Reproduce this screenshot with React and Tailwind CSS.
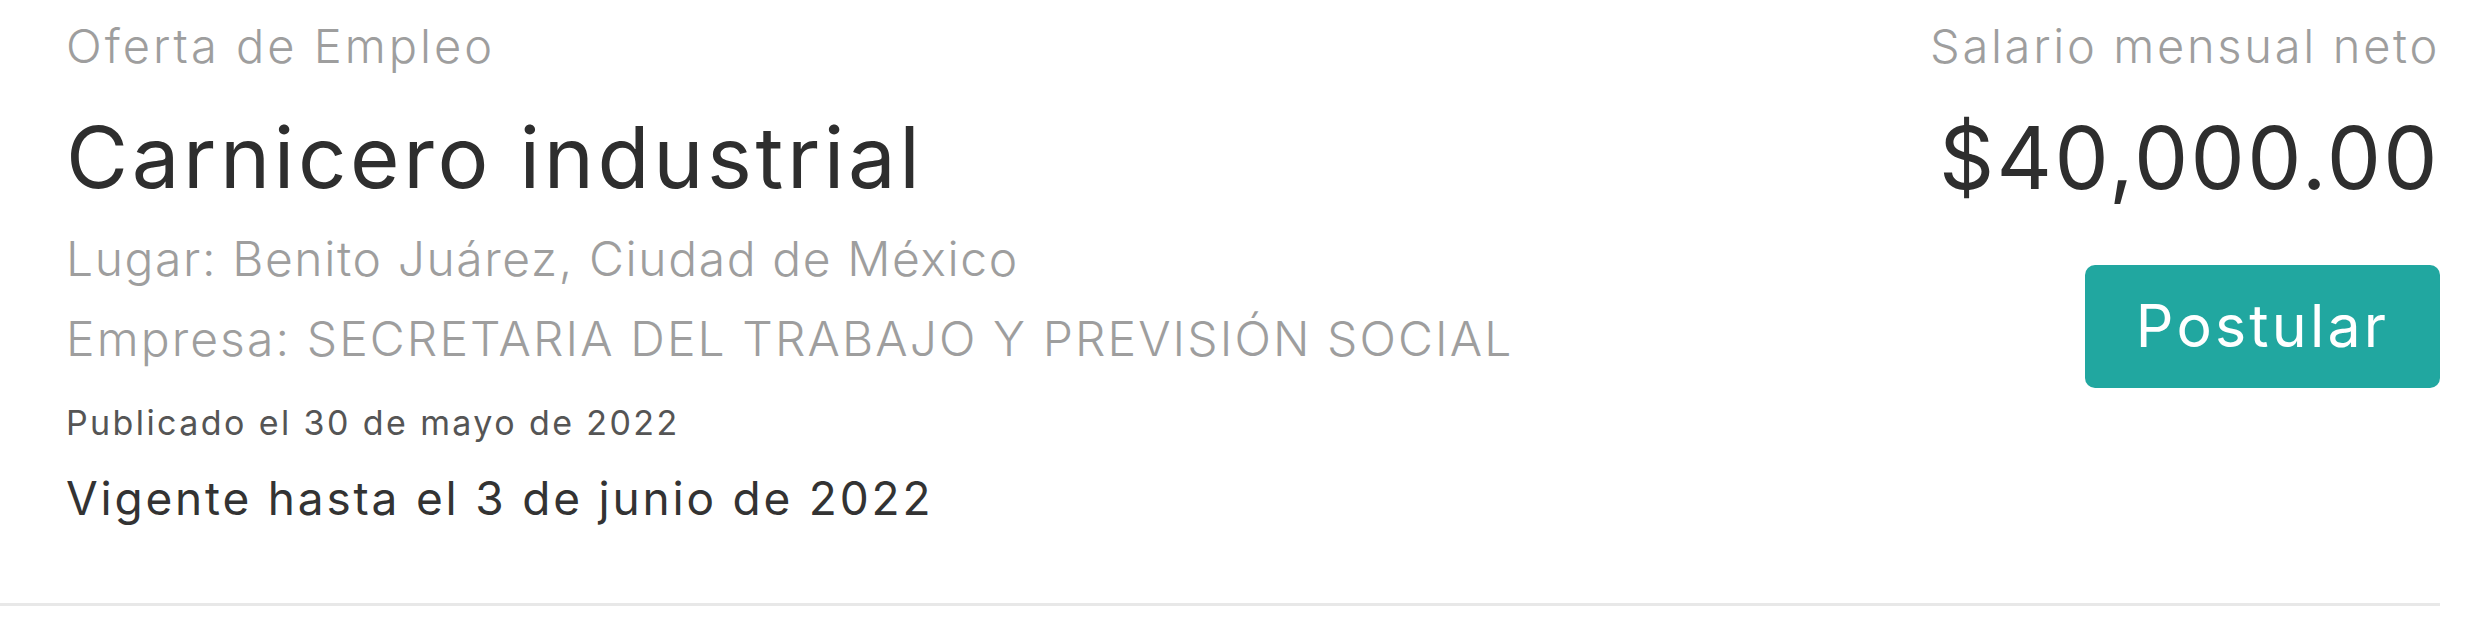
export default function App() {
  return (
    <div className="w-[2471px] h-[620px] bg-white" style={{ fontFamily: 'Inter, "Noto Sans", sans-serif' }}>
      <div className="w-[2440px] h-[606px] border-b-[3px] border-[#e8e8e8] flex justify-between">
        <div className="pl-[66px] flex flex-col">
          <div className="h-[80px] pt-[18px] text-[47px] leading-[56px] font-light tracking-[3px] text-[#9e9e9e]">Oferta de Empleo</div>
          <div className="h-[141px] pt-[28px] text-[85px] leading-[100px] font-normal tracking-[3.6px] text-[#2e2e2e]">Carnicero industrial</div>
          <div className="h-[89px] pt-[9px] text-[48px] leading-[58px] font-light tracking-[1.6px] text-[#9e9e9e]">Lugar: Benito Juárez, Ciudad de México</div>
          <div className="h-[93px] text-[48px] leading-[58px] font-light tracking-[2.1px] text-[#9e9e9e]">Empresa: SECRETARIA DEL TRABAJO Y PREVISIÓN SOCIAL</div>
          <div className="h-[68px] text-[34px] leading-[40px] font-normal tracking-[2.4px] text-[#555555]">Publicado el 30 de mayo de 2022</div>
          <div className="text-[46px] leading-[54px] font-normal tracking-[2.8px] text-[#333333]">Vigente hasta el 3 de junio de 2022</div>
        </div>
        <div className="flex flex-col items-end">
          <div className="h-[80px] pt-[18px] text-[47px] leading-[56px] font-light tracking-[2.7px] text-[#9e9e9e]">Salario mensual neto</div>
          <div className="h-[166px] pt-[28px] text-[86px] leading-[100px] font-normal tracking-[2.4px] text-[#2e2e2e]">$40,000.00</div>
          <button className="mt-[19px] w-[355px] h-[123px] rounded-[10px] bg-[#21a7a0] text-white text-[59px] font-normal tracking-[3.2px]">Postular</button>
        </div>
      </div>
    </div>
  );
}
